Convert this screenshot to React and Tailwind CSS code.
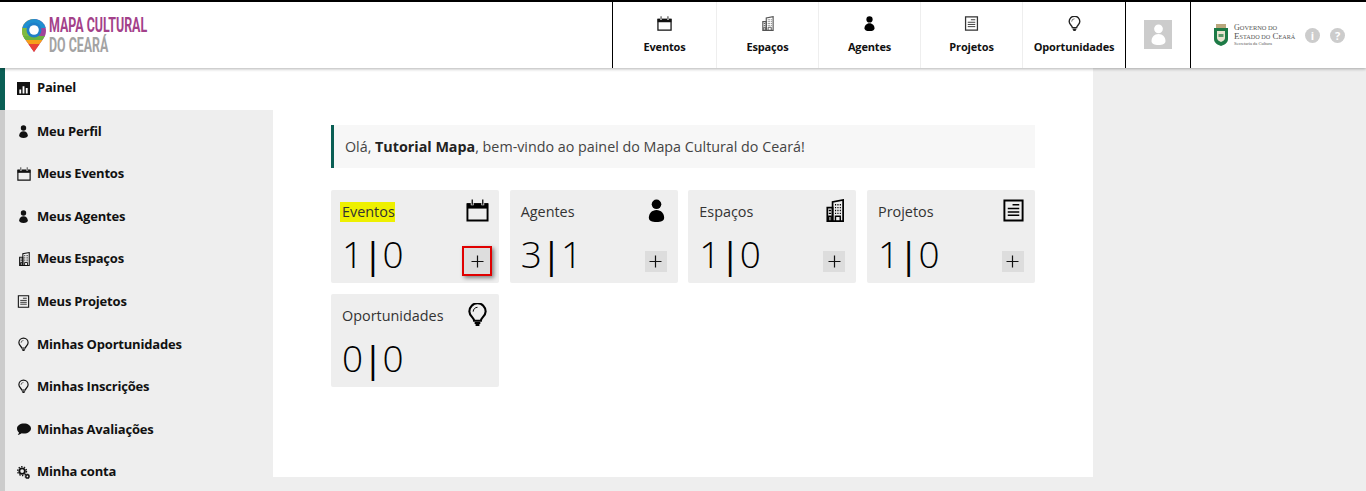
const Calendar = ({ className }) => (
  <svg viewBox="0 0 24 24" className={className} fill="none">
    <path d="M1.500 5.500h21v17h-21z" stroke="currentColor" strokeWidth="2" />
    <path d="M1 4.500h22v5.500H1z" fill="currentColor" />
    <path d="M6.500 0.500v6M17.500 0.500v6" stroke="#eeeeee" strokeWidth="3" />
    <path d="M6.500 0.500v5.500M17.500 0.500v5.500" stroke="currentColor" strokeWidth="1.300" />
  </svg>
);

const Person = ({ className }) => (
  <svg viewBox="0 0 24 24" className={className} fill="currentColor">
    <circle cx="12" cy="5.500" r="5" />
    <path d="M12 11.500c-4.800 0-8 3.800-8 8 0 3.200 3.200 4.500 8 4.500s8-1.300 8-4.500c0-4.200-3.200-8-8-8z" />
  </svg>
);

const Building = ({ className }) => (
  <svg viewBox="0 0 24 24" className={className} fill="none" stroke="currentColor">
    <path d="M10 23V3l11-2v22z" strokeWidth="1.800" />
    <path d="M4.500 23V9H10v14z" strokeWidth="1.800" />
    <path d="M12.500 6h1.200M15 6h1.200M17.500 6h1.200M12.500 9h1.200M15 9h1.200M17.500 9h1.200M12.500 12h1.200M15 12h1.200M17.500 12h1.200M12.500 15h1.200M15 15h1.200M17.500 15h1.200M6 12h2.500M6 15h2.500" strokeWidth="1.500" />
    <path d="M6 23v-5h2.500v5M13 23v-5h5v5" strokeWidth="1.500" />
  </svg>
);

const Doc = ({ className }) => (
  <svg viewBox="0 0 24 24" className={className} fill="none" stroke="currentColor">
    <path d="M2.500 1.500h19v21h-19z" strokeWidth="2" />
    <path d="M11 6h7M6 10h12M6 13.500h12M6 17h12" strokeWidth="1.500" />
  </svg>
);

const Bulb = ({ className }) => (
  <svg viewBox="0 0 24 24" className={className} fill="none" stroke="currentColor">
    <path d="M8.500 18.500c0-3-5-5-5-9.700a8.500 8.500 0 0 1 17 0c0 4.700-5 6.700-5 9.700z" strokeWidth="2.200" />
    <path d="M9 20.800h6M10 23h4" strokeWidth="2" />
    <path d="M7.500 9a4.500 4.500 0 0 1 4.500-4.500" strokeWidth="1" />
  </svg>
);

const Chart = ({ className }) => (
  <svg viewBox="0 0 14 14" className={className}>
    <path d="M0 0h14v14H0z" fill="#111111" />
    <path d="M2.500 8h2v4.500h-2zM6 4.500h2v8H6zM9.500 6.500h2v6h-2z" fill="#ffffff" />
  </svg>
);

const Bubble = ({ className }) => (
  <svg viewBox="0 0 14 12" className={className} fill="currentColor">
    <path d="M7 0.500c3.900 0 7 2.100 7 5s-3.100 5-7 5c-.8 0-1.500-.1-2.200-.2C3.700 11.200 2.200 11.800.8 12c.6-.7 1.100-1.600 1.200-2.400C.8 8.600 0 7.100 0 5.500c0-2.900 3.100-5 7-5z" />
  </svg>
);

const Gears = ({ className }) => (
  <svg viewBox="0 0 14 14" className={className} fill="none" stroke="currentColor">
    <circle cx="5.500" cy="5.500" r="3" strokeWidth="2" />
    <circle cx="5.500" cy="5.500" r="4.800" strokeWidth="1.400" strokeDasharray="1.500 1.500" />
    <circle cx="11.200" cy="11.200" r="1.700" strokeWidth="1.600" />
    <circle cx="11.200" cy="11.200" r="2.600" strokeWidth="0.900" strokeDasharray="1 1" />
  </svg>
);

const PinLogo = () => (
  <svg viewBox="0 0 24 33" className="h-[33px] w-6 shrink-0">
    <defs>
      <clipPath id="pin">
        <path d="M12 0C5.200 0 0 5.300 0 11.800c0 3 1 5.500 2.600 7.800L12 33l9.400-13.400c1.600-2.300 2.600-4.800 2.600-7.800C24 5.300 18.800 0 12 0z" />
      </clipPath>
    </defs>
    <g clipPath="url(#pin)">
      <rect x="0" y="0" width="24" height="33" fill="#a0449a" />
      <rect x="0" y="0" width="12" height="20" fill="#f2c81e" />
      <rect x="0" y="9" width="8" height="11" fill="#7dbb42" />
      <rect x="0" y="0" width="24" height="9" fill="#1f8fd0" />
      <rect x="0" y="17" width="24" height="4" fill="#6cb33f" />
      <rect x="0" y="21" width="24" height="4" fill="#f6a01a" />
      <rect x="0" y="25" width="24" height="8" fill="#ea4335" />
    </g>
    <circle cx="12" cy="11" r="7.500" fill="#1f7fc8" />
    <circle cx="12" cy="11" r="4.800" fill="#ffffff" />
  </svg>
);

const Crest = () => (
  <svg viewBox="0 0 16 22" className="h-[22px] w-4 shrink-0">
    <path d="M3 0h10v4H3z" fill="#b9a77c" />
    <path d="M1 4h14v11c0 4-4 6-7 7-3-1-7-3-7-7z" fill="#1d7a46" />
    <path d="M4 7h8v7c0 2-2 3-4 4-2-1-4-2-4-4z" fill="#e9e4d0" />
    <path d="M5.500 10h5v3h-5z" fill="#5a9a6a" />
  </svg>
);

const navItems = [
  { label: 'Eventos', icon: Calendar, color: 'text-[#111111]', w: 'w-[104px]' },
  { label: 'Espaços', icon: Building, color: 'text-[#555555]', w: 'w-[102px]' },
  { label: 'Agentes', icon: Person, color: 'text-black', w: 'w-[102px]' },
  { label: 'Projetos', icon: Doc, color: 'text-[#333333]', w: 'w-[102px]' },
  { label: 'Oportunidades', icon: Bulb, color: 'text-[#222222]', w: 'w-[102px]' },
];

const sideItems = [
  { label: 'Meu Perfil', icon: Person, size: 'w-[13px] h-[13px]' },
  { label: 'Meus Eventos', icon: Calendar, size: 'w-[14px] h-[14px]' },
  { label: 'Meus Agentes', icon: Person, size: 'w-[13px] h-[13px]' },
  { label: 'Meus Espaços', icon: Building, size: 'w-[14px] h-[14px]' },
  { label: 'Meus Projetos', icon: Doc, size: 'w-[13px] h-[13px]' },
  { label: 'Minhas Oportunidades', icon: Bulb, size: 'w-[13px] h-[15px]' },
  { label: 'Minhas Inscrições', icon: Bulb, size: 'w-[13px] h-[15px]' },
  { label: 'Minhas Avaliações', icon: Bubble, size: 'w-[14px] h-3' },
  { label: 'Minha conta', icon: Gears, size: 'w-[13px] h-[13px]' },
];

const cards = [
  { title: 'Eventos', value: '1|0', icon: Calendar, mark: true, focus: true },
  { title: 'Agentes', value: '3|1', icon: Person },
  { title: 'Espaços', value: '1|0', icon: Building },
  { title: 'Projetos', value: '1|0', icon: Doc },
  { title: 'Oportunidades', value: '0|0', icon: Bulb, noAdd: true },
];

const Header = () => (
  <header className="relative z-10 flex h-[68px] shrink-0 items-stretch border-t-2 border-black bg-white shadow-[0_1px_3px_rgba(0,0,0,0.3)]">
    <div className="flex w-[612px] items-center pl-[22px]">
      <PinLogo />
      <div className="ml-[3px] flex flex-col font-['Roboto',sans-serif] text-[20px] font-bold leading-[20px]">
        <span className="origin-left scale-x-[0.62] whitespace-nowrap text-[#a3418a]">MAPA CULTURAL</span>
        <span className="origin-left scale-x-[0.62] whitespace-nowrap text-[#a3a3a3]">DO CEARÁ</span>
      </div>
    </div>
    <nav className="flex border-l border-black">
      {navItems.map(({ label, icon: Icon, color, w }, i) => (
        <a
          key={label}
          className={`flex ${w} flex-col items-center pt-[14px] ${i < 4 ? 'border-r border-[#eeeeee]' : ''}`}
        >
          <Icon className={`h-[15px] w-[15px] ${color}`} />
          <span className="mt-2 text-[11px] font-bold leading-[15px] tracking-[-0.15px] text-[#111111]">{label}</span>
        </a>
      ))}
    </nav>
    <div className="flex w-[66px] items-start justify-center border-x border-black pt-[18px]">
      <div className="flex h-[29px] w-[28px] items-center justify-center bg-[#cccccc]">
        <Person className="h-[21px] w-[21px] text-white" />
      </div>
    </div>
    <div className="flex flex-1 items-center pl-[22px]">
      <Crest />
      <div className="ml-[5px] flex w-[60px] flex-col font-['Liberation_Serif',serif] text-[#555555]">
        <span className="text-[8px] leading-[8px] whitespace-nowrap">G<span className="text-[6.400px]">OVERNO DO</span></span>
        <span className="text-[9px] leading-[9px] whitespace-nowrap">E<span className="text-[6.200px]">STADO DO</span> C<span className="text-[6.200px]">EARÁ</span></span>
        <span className="text-[4.500px] leading-[6px]">Secretaria da Cultura</span>
      </div>
      <span className="ml-[11px] flex h-[15px] w-[15px] items-center justify-center rounded-full bg-[#cccccc] text-[11px] font-bold leading-none text-white">i</span>
      <span className="ml-[10px] flex h-[15px] w-[15px] items-center justify-center rounded-full bg-[#cccccc] text-[11px] font-bold leading-none text-white">?</span>
    </div>
  </header>
);

const Sidebar = () => (
  <aside className="flex w-[273px] shrink-0 flex-col border-l-[5px] border-[#cccccc] bg-[#eeeeee]">
    <a className="-ml-[5px] flex h-[42px] items-center border-l-[5px] border-[#0a5f55] bg-white pb-[2px] pl-[12px]">
      <span className="flex w-5 shrink-0 items-center"><Chart className="h-[13px] w-[13px]" /></span>
      <span className="text-[13px] font-bold tracking-[-0.2px] text-[#111111]">Painel</span>
    </a>
    {sideItems.map(({ label, icon: Icon, size }) => (
      <a key={label} className="flex h-[42.600px] shrink-0 items-center pl-[12px]">
        <span className="flex w-5 shrink-0 items-center justify-start">
          <Icon className={`${size} text-[#111111]`} />
        </span>
        <span className="text-[13px] font-bold tracking-[-0.2px] text-[#111111]">{label}</span>
      </a>
    ))}
  </aside>
);

const Card = ({ title, value, icon: Icon, mark, focus, noAdd }) => {
  const [left, right] = value.split('|');
  return (
    <div className="flex h-[93px] w-[168px] flex-col rounded-[2px] bg-[#eeeeee] pb-[11px] pl-[10px] pr-[10px] pt-[9px]">
      <div className="flex items-start justify-between">
        <span className={`mt-[3px] text-[14.400px] leading-5 text-[#333333] ${mark ? '-ml-[1px] bg-[#eef000] pl-[2px]' : 'pl-[1px]'}`}>{title}</span>
        <Icon className="h-[23px] w-[23px] text-black" />
      </div>
      <div className="mt-auto flex items-end justify-between">
        <span className="-mb-[8px] pl-[1px] text-[37px] font-[350] leading-[52px] tracking-[-0.5px] text-black">
          {left}
          <span className="font-normal">|</span>
          {right}
        </span>
        {!noAdd && (
          <button
            className={
              focus
                ? '-mb-[4px] -mr-[3px] flex h-[30px] w-[30px] items-center justify-center border-2 border-[#e00000] bg-[#dddddd] shadow-[2px_2px_4px_rgba(0,0,0,0.45)]'
                : 'mr-[1px] flex h-[21px] w-[22px] items-center justify-center bg-[#dddddd]'
            }
          >
            <svg viewBox="0 0 13 13" className="h-[13px] w-[13px] text-[#111111]" fill="none" stroke="currentColor" strokeWidth="1.200">
              <path d="M6.500 0.500v12M0.500 6.500h12" />
            </svg>
          </button>
        )}
      </div>
    </div>
  );
};

export default function App() {
  return (
    <div className="flex h-[491px] flex-col overflow-hidden bg-[#eeeeee] font-['Open_Sans',sans-serif]">
      <Header />
      <div className="flex flex-1 items-start">
        <Sidebar />
        <main className="h-[409px] w-[820px] bg-white pl-[58px] pt-[57px]">
          <div className="flex h-[43px] w-[704px] items-center border-l-[3px] border-[#0a5f55] bg-[#f7f7f7] pl-[11px] text-[14.300px] text-[#444444]">
            <p>
              Olá, <strong className="font-bold text-[#222222]">Tutorial Mapa</strong>, bem-vindo ao painel do Mapa Cultural do Ceará!
            </p>
          </div>
          <div className="mt-[22px] flex w-[704px] flex-wrap gap-x-[10.670px] gap-y-[11px]">
            {cards.map((c) => (
              <Card key={c.title} {...c} />
            ))}
          </div>
        </main>
      </div>
    </div>
  );
}
